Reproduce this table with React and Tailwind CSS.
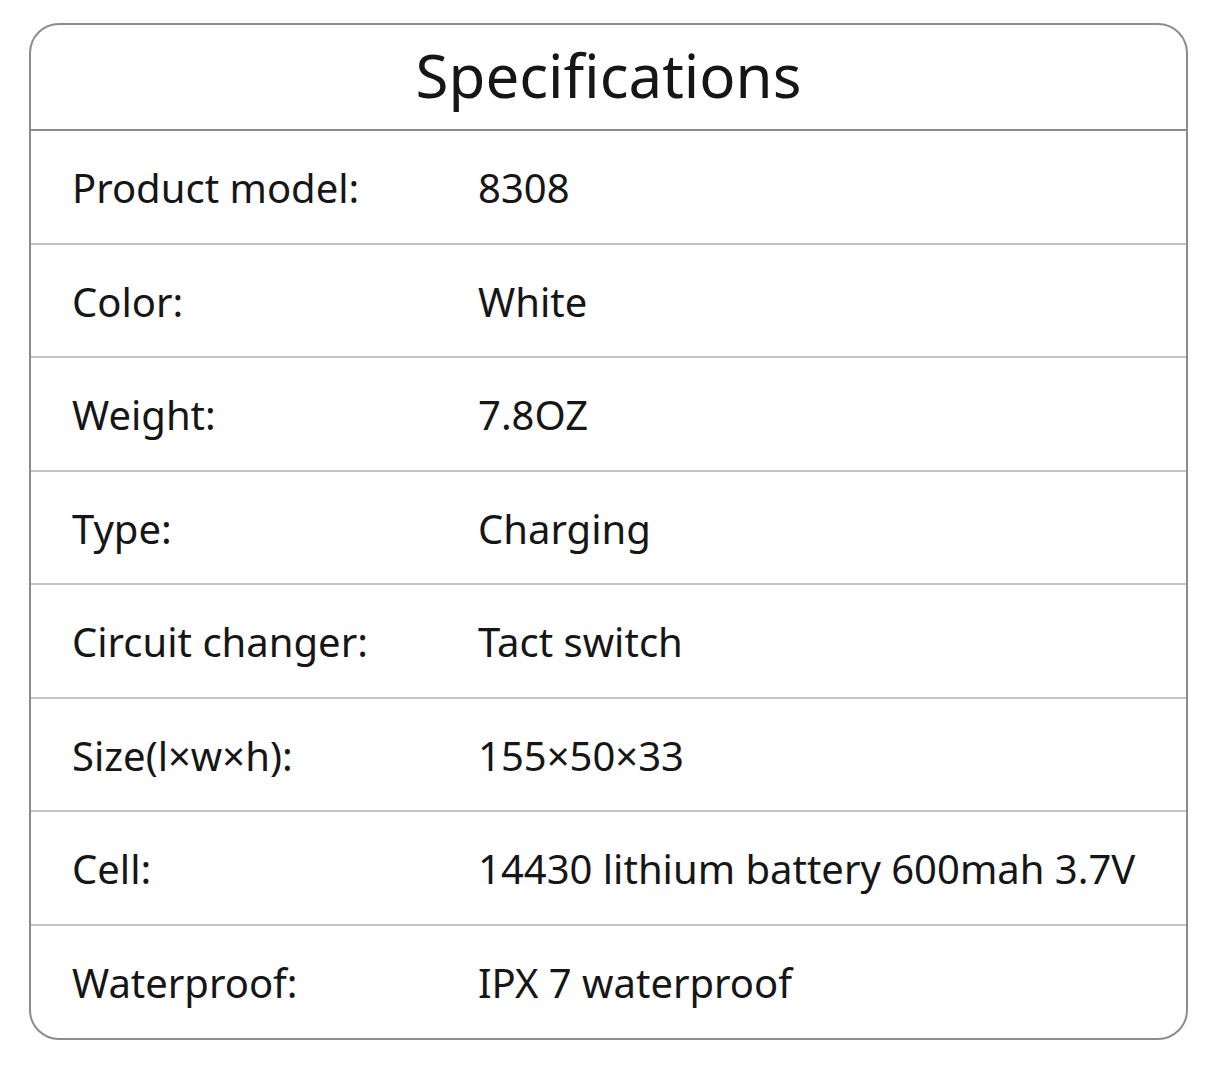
export default function App() {
  const rows = [
    ["Product model:", "8308"],
    ["Color:", "White"],
    ["Weight:", "7.8OZ"],
    ["Type:", "Charging"],
    ["Circuit changer:", "Tact switch"],
    ["Size(l×w×h):", "155×50×33"],
    ["Cell:", "14430 lithium battery 600mah 3.7V"],
    ["Waterproof:", "IPX 7 waterproof"],
  ];
  return (
    <div className="w-[1214px] h-[1090px] bg-white pt-[23px] pl-[29px]" style={{ fontFamily: '"Noto Sans", sans-serif' }}>
      <div className="w-[1159px] h-[1017px] border-2 border-[#8c8c8c] rounded-[30px] overflow-hidden flex flex-col text-[#161616]">
        <div className="h-[106px] flex items-center justify-center border-b-2 border-[#8c8c8c] shrink-0">
          <span className="text-[60px] leading-none pb-[4px]">Specifications</span>
        </div>
        {rows.map(([k, v], i) => (
          <div
            key={k}
            className={
              "flex items-center pl-[41px] pt-[3px] text-[40px] leading-none " +
              (i < rows.length - 1 ? "h-[113.5px] shrink-0 border-b-2 border-[#c4c4c4]" : "flex-1")
            }
          >
            <span className="w-[406px] shrink-0">{k}</span>
            <span>{v}</span>
          </div>
        ))}
      </div>
    </div>
  );
}
